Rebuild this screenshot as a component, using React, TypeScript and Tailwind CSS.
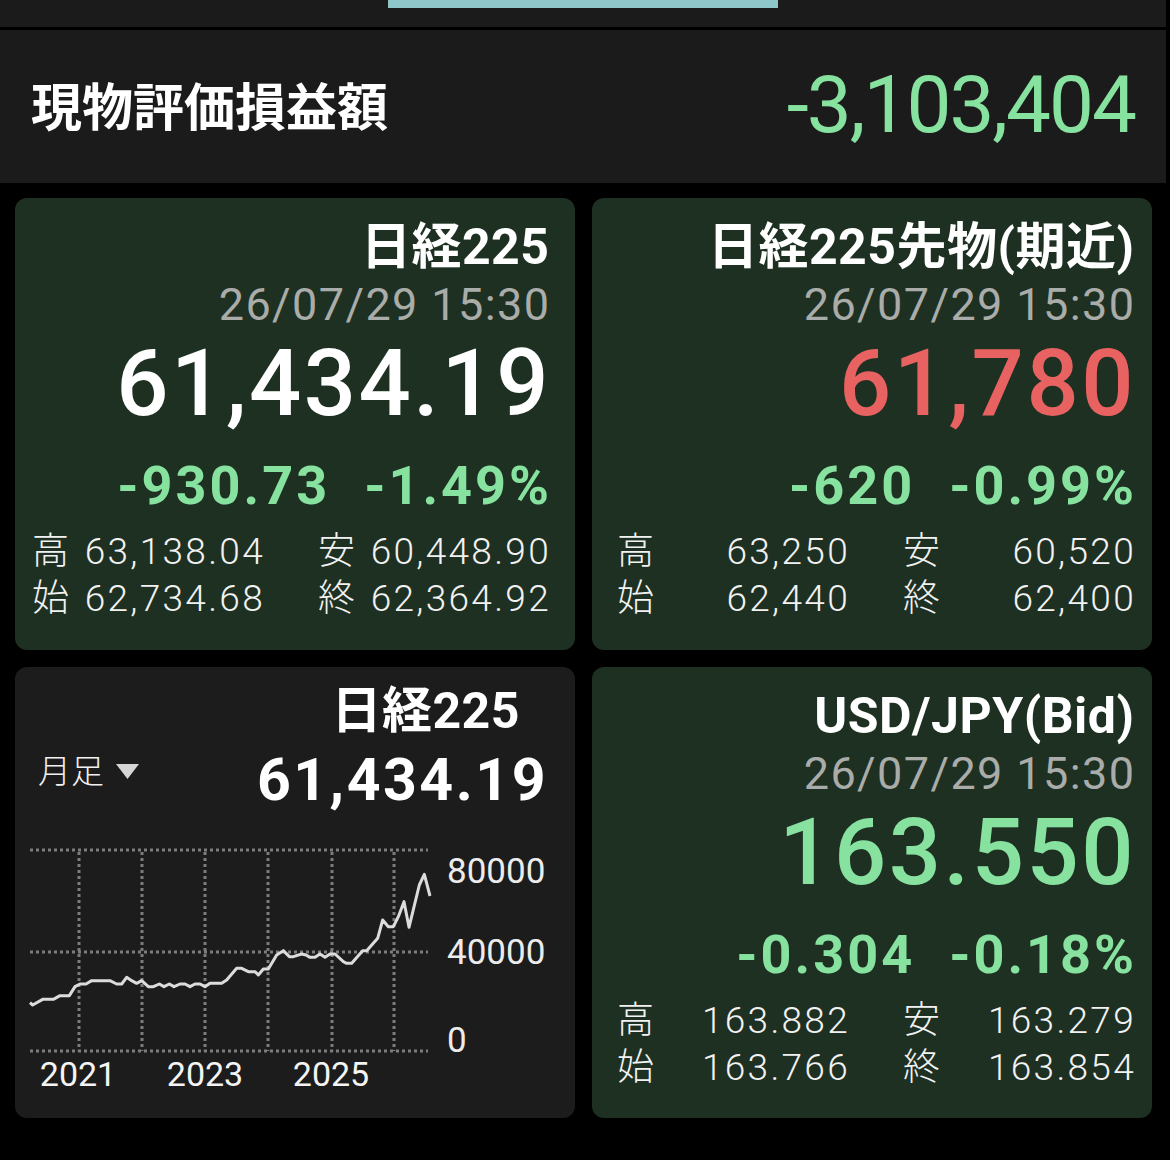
import React from "react";

type Stat = [string, string, string, string];

const CHART_PTS: [number, number][] = [
  [90, 518], [98, 525], [128, 508], [160, 508], [180, 497], [208, 497], [225, 470], [240, 462], [258, 462], [275, 452],
  [330, 452], [350, 462], [365, 462], [380, 442], [395, 452], [410, 460], [425, 452], [445, 470], [460, 470], [478, 462],
  [492, 470], [508, 462], [522, 470], [540, 462], [555, 462], [570, 470], [585, 462], [600, 462], [615, 470], [630, 460],
  [665, 460], [680, 450], [710, 415], [725, 415], [745, 425], [765, 425], [775, 435], [790, 417], [805, 417], [830, 375],
  [850, 362], [868, 380], [880, 380], [905, 372], [918, 375], [930, 382], [945, 382], [960, 372], [975, 382], [990, 372],
  [1005, 372], [1030, 395], [1040, 400], [1055, 400], [1088, 362], [1100, 362], [1133, 325], [1148, 270], [1165, 290],
  [1180, 290], [1195, 260], [1212, 215], [1227, 292], [1258, 165], [1273, 133], [1290, 198],
];

function Stats({ rows }: { rows: Stat[] }) {
  return (
    <div className="mt-[12px] grid grid-cols-[38px_193px_93px_193px] text-[37px] leading-[47px] font-light text-[#f2f2f2] self-stretch">
      {rows.map((r, i) => (
        <React.Fragment key={i}>
          <span>{r[0]}</span>
          <span className="text-right tracking-[2.3px] mr-[-2px]">{r[1]}</span>
          <span className="pl-[55px]">{r[2]}</span>
          <span className="text-right tracking-[2.3px] mr-[-2px]">{r[3]}</span>
        </React.Fragment>
      ))}
    </div>
  );
}

function QuoteHead({
  title,
  date,
  price,
  priceClass,
  change,
  pct,
}: {
  title: string;
  date: string;
  price: string;
  priceClass: string;
  change: string;
  pct: string;
}) {
  return (
    <>
      <div className="text-[50px] font-bold leading-[58px] tracking-[0.5px] mr-[-0.5px] text-white">{title}</div>
      <div className="text-[45px] leading-[58px] tracking-[1.4px] mr-[-1.4px] text-[#a9aca9]">{date}</div>
      <div className={"text-[92px] font-medium leading-[100px] tracking-[2.5px] mr-[-2px] " + priceClass}>{price}</div>
      <div className="mt-[22px] flex gap-[34px] text-[54px] font-bold leading-[60px] tracking-[3px] mr-[-3px] text-[#87e2a0]">
        <span>{change}</span>
        <span>{pct}</span>
      </div>
    </>
  );
}

function Chart() {
  const pts = CHART_PTS.map(([x, y]) => `${x / 3 - 15},${y / 3 - 10}`).join(" ");
  const vx = [64, 127, 190, 253, 317, 379];
  const hy = [10, 112, 211];
  return (
    <svg width="560" height="260" viewBox="0 0 560 260" className="block mt-[31px]">
      {hy.map((y) => (
        <line key={"h" + y} x1="15" x2="413" y1={y} y2={y} stroke="#7c7c7c" strokeWidth="3" strokeDasharray="3 3" />
      ))}
      {vx.map((x) => (
        <line key={"v" + x} x1={x} x2={x} y1="12" y2="211" stroke="#7c7c7c" strokeWidth="3" strokeDasharray="3 3" />
      ))}
      <polyline points={pts} fill="none" stroke="#dcdcdc" strokeWidth="3" strokeLinejoin="round" />
      <g fill="#ececec" fontFamily="Roboto" fontSize="35">
        <text x="432" y="43">80000</text>
        <text x="432" y="124">40000</text>
        <text x="432" y="212">0</text>
      </g>
      <g fill="#f4f4f4" fontFamily="Roboto" fontSize="34" textAnchor="middle">
        <text x="63" y="246">2021</text>
        <text x="190" y="246">2023</text>
        <text x="316" y="246">2025</text>
      </g>
    </svg>
  );
}

export default function App() {
  return (
    <div className="w-[1170px] h-[1160px] bg-black overflow-hidden font-['Roboto','Noto_Sans_CJK_JP',sans-serif]">
      <div className="w-[1166px] h-[27px] bg-[#1b1b1b] flex justify-center">
        <div className="w-[390px] h-[8px] bg-[#8fc6ca]" />
      </div>
      <div className="h-[3px]" />
      <div className="w-[1166px] h-[153px] bg-[#1b1b1b] flex items-center justify-between pl-[31px] pr-[31px]">
        <div className="text-[51px] font-bold text-white leading-[60px] pb-[6px] font-['Noto_Sans_CJK_JP',sans-serif]">現物評価損益額</div>
        <div className="text-[80px] leading-[90px] text-[#87e2a0] tracking-[-2px] pb-[4px]">-3,103,404</div>
      </div>

      <div className="grid grid-cols-[560px_560px] grid-rows-[452px_451px] gap-[17px] pl-[15px] pt-[15px]">
        <div className="rounded-[12px] bg-[#1e3022] flex flex-col items-end pt-[20px] pl-[17px] pr-[26px]">
          <QuoteHead
            title="日経225"
            date="26/07/29 15:30"
            price="61,434.19"
            priceClass="text-white"
            change="-930.73"
            pct="-1.49%"
          />
          <Stats
            rows={[
              ["高", "63,138.04", "安", "60,448.90"],
              ["始", "62,734.68", "終", "62,364.92"],
            ]}
          />
        </div>

        <div className="rounded-[12px] bg-[#1e3022] flex flex-col items-end pt-[20px] pl-[25px] pr-[18px]">
          <QuoteHead
            title="日経225先物(期近)"
            date="26/07/29 15:30"
            price="61,780"
            priceClass="text-[#e96262]"
            change="-620"
            pct="-0.99%"
          />
          <Stats
            rows={[
              ["高", "63,250", "安", "60,520"],
              ["始", "62,440", "終", "62,400"],
            ]}
          />
        </div>

        <div className="rounded-[12px] bg-[#1c1c1c] flex flex-col pt-[15px]">
          <div className="self-end pr-[55px] text-[50px] font-bold leading-[58px] tracking-[0.5px] text-white">日経225</div>
          <div className="mt-[11px] h-[58px] flex items-center justify-between pl-[23px] pr-[27px]">
            <div className="flex items-center gap-[12px] pb-[16px] text-[33px] font-light text-[#f0f0f0] leading-[40px]">
              <span>月足</span>
              <svg width="23" height="16" viewBox="0 0 23 16">
                <polygon points="0,0 23,0 11.5,15" fill="#d6d6d6" />
              </svg>
            </div>
            <div className="text-[59px] font-bold leading-[58px] tracking-[2.5px] text-white">61,434.19</div>
          </div>
          <Chart />
        </div>

        <div className="rounded-[12px] bg-[#1e3022] flex flex-col items-end pt-[20px] pl-[25px] pr-[18px]">
          <QuoteHead
            title="USD/JPY(Bid)"
            date="26/07/29 15:30"
            price="163.550"
            priceClass="text-[#87e2a0]"
            change="-0.304"
            pct="-0.18%"
          />
          <Stats
            rows={[
              ["高", "163.882", "安", "163.279"],
              ["始", "163.766", "終", "163.854"],
            ]}
          />
        </div>
      </div>
    </div>
  );
}
